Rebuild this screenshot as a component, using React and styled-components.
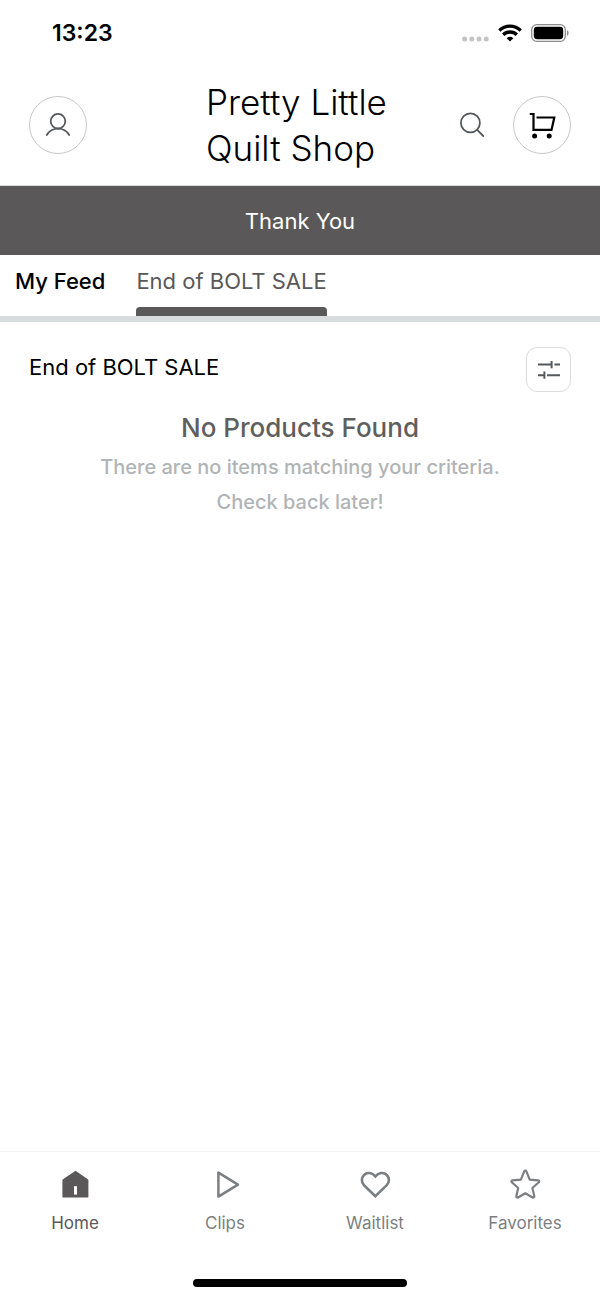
import React, { useState } from 'react';
import styled, { createGlobalStyle } from 'styled-components';

const GlobalStyle = createGlobalStyle`
  * {
    box-sizing: border-box;
  }
  body {
    margin: 0;
    background: #fff;
    font-family: Inter, "Noto Sans", sans-serif;
    color: #000;
  }
  button {
    padding: 0;
    border: 0;
    background: none;
    font: inherit;
    color: inherit;
    cursor: pointer;
  }
  svg {
    display: block;
  }
`;

const Page = styled.div`
  display: flex;
  flex-direction: column;
  min-height: 100vh;
`;

const StatusBar = styled.div`
  display: flex;
  align-items: center;
  justify-content: space-between;
  height: 66px;
  padding: 0 31px 0 52px;
`;

const Time = styled.span`
  font-size: 23px;
  line-height: 28px;
  font-weight: 600;
`;

const StatusIcons = styled.div`
  display: flex;
  align-items: center;
  gap: 9px;
`;

const Header = styled.header`
  display: grid;
  grid-template-columns: 1fr minmax(0, 188px) 1fr;
  align-items: center;
  padding: 13px 29px 14px;
  border-bottom: 1px solid #dcdcdc;
`;

const ShopName = styled.h1`
  margin: 0;
  font-size: 35px;
  line-height: 46px;
  font-weight: 300;
`;

const HeaderActions = styled.div`
  display: flex;
  align-items: center;
  justify-content: flex-end;
  gap: 28px;
`;

const RoundButton = styled.button`
  display: flex;
  align-items: center;
  justify-content: center;
  width: 58px;
  height: 58px;
  && {
    border: 1px solid #c8c8c8;
  }
  border-radius: 50%;
`;

const Banner = styled.div`
  padding: 19px 16px 18px;
  background: #5a5859;
  color: #fff;
  font-size: 22px;
  line-height: 32px;
  text-align: center;
`;

const Tabs = styled.nav`
  display: flex;
  gap: 31px;
  padding: 0 15px;
  border-bottom: 6px solid #d9dcdd;
`;

const Tab = styled.button`
  display: flex;
  flex-direction: column;
  justify-content: space-between;
  height: 61px;
  && {
    padding-top: 11px;
    color: ${({ $active }) => ($active ? '#5a5859' : '#000')};
    font-size: 22px;
    line-height: 30px;
    font-weight: ${({ $active }) => ($active ? 400 : 500)};
  }
  &::after {
    content: '';
    width: 100%;
    height: 9px;
    border-radius: 4px 4px 0 0;
    background: ${({ $active }) => ($active ? '#5a5859' : 'transparent')};
  }
`;

const Main = styled.main`
  flex: 1;
  padding: 25px 29px;
`;

const ListHead = styled.div`
  display: flex;
  align-items: flex-start;
  justify-content: space-between;
`;

const ListTitle = styled.h2`
  margin: 0;
  padding-top: 5px;
  font-size: 22px;
  line-height: 30px;
  font-weight: 400;
`;

const FilterButton = styled.button`
  display: flex;
  align-items: center;
  justify-content: center;
  width: 45px;
  height: 45px;
  && {
    border: 1px solid #dcdcdc;
  }
  border-radius: 11px;
`;

const Empty = styled.section`
  padding-top: 18px;
  text-align: center;
`;

const EmptyTitle = styled.h3`
  margin: 0;
  font-size: 26px;
  line-height: 36px;
  font-weight: 500;
  color: #5f5f5f;
`;

const EmptyText = styled.p`
  margin: 4px 0 0;
  font-size: 20px;
  line-height: 35px;
  font-weight: 500;
  color: #b1b4b6;
`;

const BottomNav = styled.nav`
  display: grid;
  grid-template-columns: repeat(4, 1fr);
  padding-top: 16px;
  border-top: 1px solid #f2f2f2;
`;

const NavLink = styled.a`
  display: flex;
  flex-direction: column;
  align-items: center;
  gap: 11px;
  color: ${({ $active }) => ($active ? '#5a5859' : '#7b7f82')};
  font-size: 17px;
  line-height: 24px;
  text-decoration: none;
`;

const HomeIndicator = styled.div`
  width: 214px;
  height: 8px;
  margin: 44px auto 12px;
  border-radius: 4px;
  background: #000;
`;

const SignalIcon = () => (
  <svg width="28" height="18" viewBox="0 0 28 18" fill="#c4c4c4">
    <circle cx="3.6" cy="15" r="2.5" />
    <circle cx="10.8" cy="15" r="2.5" />
    <circle cx="18" cy="15" r="2.5" />
    <circle cx="25.2" cy="15" r="2.5" />
  </svg>
);

const WifiIcon = () => (
  <svg width="24" height="18" viewBox="0 0 24 18" fill="none" stroke="#000" strokeWidth="3.3">
    <path d="M1.3 6.500a15.300 15.300 0 0 1 21.400 0" />
    <path d="M5.200 10.800a9.700 9.700 0 0 1 13.600 0" />
    <path d="M12 17.600l-3.300-3.400a4.700 4.700 0 0 1 6.600 0z" fill="#000" stroke="none" />
  </svg>
);

const BatteryIcon = () => (
  <svg width="38" height="18" viewBox="0 0 38 18">
    <rect x="0.7" y="0.7" width="33.6" height="16.6" rx="5" fill="none" stroke="#8c8c8c" strokeWidth="1.3" />
    <rect x="2.8" y="2.8" width="29.4" height="12.4" rx="3.4" />
    <path d="M36 6.2c2.1.8 2.1 4.8 0 5.6z" fill="#8c8c8c" />
  </svg>
);

const UserIcon = () => (
  <svg width="26" height="26" viewBox="0 0 26 26" fill="none" stroke="#55595b" strokeWidth="1.8" strokeLinecap="round">
    <circle cx="13" cy="9.200" r="7.300" />
    <path d="M1.800 23a13 13 0 0 1 22.400 0" />
  </svg>
);

const SearchIcon = () => (
  <svg width="26" height="26" viewBox="0 0 26 26" fill="none" stroke="#55595b" strokeWidth="1.8" strokeLinecap="round">
    <circle cx="11.400" cy="10.900" r="9.500" />
    <path d="M18.200 17.800l6.100 6.200" />
  </svg>
);

const CartIcon = () => (
  <svg width="28" height="28" viewBox="0 0 28 28" fill="none" stroke="#000" strokeWidth="2.2">
    <path d="M1.800 3h3.700v15.900h18l2.800-12.400H8.500" />
    <circle cx="6.600" cy="25" r="2.500" fill="#000" stroke="none" />
    <circle cx="21.200" cy="25" r="2.500" fill="#000" stroke="none" />
  </svg>
);

const FilterIcon = () => (
  <svg width="22" height="20" viewBox="0 0 22 20" fill="none" stroke="#55595b" strokeWidth="2">
    <path d="M0 4.600h13.500M13.600 1v7.200M16.400 4.600H22M0 15.200h5.600M6.400 11.600v7.200M9 15.200h13" />
  </svg>
);

const HomeIcon = () => (
  <svg width="32" height="32" viewBox="0 0 32 32">
    <path
      d="M16.600 2.800l12.200 8.400a1.600 1.600 0 0 1 .6 1.300v16.200a.8.8 0 0 1-.8.8H4.200a.8.8 0 0 1-.8-.8V12.500a1.600 1.600 0 0 1 .6-1.300z"
      fill="#5a5859"
    />
    <rect x="15" y="18.200" width="3" height="8.400" fill="#fff" />
  </svg>
);

const ClipsIcon = () => (
  <svg width="32" height="32" viewBox="0 0 32 32" fill="none" stroke="#7b7f82" strokeWidth="2.5" strokeLinejoin="round">
    <path d="M9.400 4.600v24l19.600-12z" />
  </svg>
);

const HeartIcon = () => (
  <svg width="32" height="32" viewBox="0 0 32 32" fill="none" stroke="#7b7f82" strokeWidth="2.6">
    <path d="M16.400 28.200L5 17.200a7.200 7.200 0 0 1 0-10.200c3.200-3.200 8.400-2.400 11.400 1.400 3-3.800 8.200-4.600 11.400-1.400a7.200 7.200 0 0 1 0 10.200z" />
  </svg>
);

const StarIcon = () => (
  <svg width="32" height="32" viewBox="0 0 32 32" fill="none" stroke="#7b7f82" strokeWidth="2.200" strokeLinejoin="round">
    <path d="M15.300 3.200c.4-.9 1.600-.9 2 0l3.400 8.400 8.500.8c1 .1 1.400 1.300.6 1.900l-6.400 5.700 1.900 8.300c.2 1-.8 1.700-1.700 1.200l-7.300-4.300L9 29.500c-.9.500-1.900-.2-1.700-1.200l1.900-8.300-6.400-5.700c-.8-.6-.4-1.800.6-1.900l8.500-.8z" />
  </svg>
);

const tabs = ['My Feed', 'End of BOLT SALE'];

const navItems = [
  { label: 'Home', Icon: HomeIcon },
  { label: 'Clips', Icon: ClipsIcon },
  { label: 'Waitlist', Icon: HeartIcon },
  { label: 'Favorites', Icon: StarIcon },
];

const App = () => {
  const [tab, setTab] = useState(tabs[1]);

  return (
    <Page>
      <GlobalStyle />
      <StatusBar>
        <Time>13:23</Time>
        <StatusIcons>
          <SignalIcon />
          <WifiIcon />
          <BatteryIcon />
        </StatusIcons>
      </StatusBar>
      <Header>
        <RoundButton aria-label="Account">
          <UserIcon />
        </RoundButton>
        <ShopName>Pretty Little Quilt Shop</ShopName>
        <HeaderActions>
          <button aria-label="Search">
            <SearchIcon />
          </button>
          <RoundButton aria-label="Cart">
            <CartIcon />
          </RoundButton>
        </HeaderActions>
      </Header>
      <Banner>Thank You</Banner>
      <Tabs>
        {tabs.map((name) => (
          <Tab key={name} $active={name === tab} onClick={() => setTab(name)}>
            {name}
          </Tab>
        ))}
      </Tabs>
      <Main>
        <ListHead>
          <ListTitle>End of BOLT SALE</ListTitle>
          <FilterButton aria-label="Filter">
            <FilterIcon />
          </FilterButton>
        </ListHead>
        <Empty>
          <EmptyTitle>No Products Found</EmptyTitle>
          <EmptyText>
            There are no items matching your criteria.
            <br />
            Check back later!
          </EmptyText>
        </Empty>
      </Main>
      <BottomNav>
        {navItems.map(({ label, Icon }, i) => (
          <NavLink key={label} href="#" $active={i === 0}>
            <Icon />
            {label}
          </NavLink>
        ))}
      </BottomNav>
      <HomeIndicator />
    </Page>
  );
};

export default App;
